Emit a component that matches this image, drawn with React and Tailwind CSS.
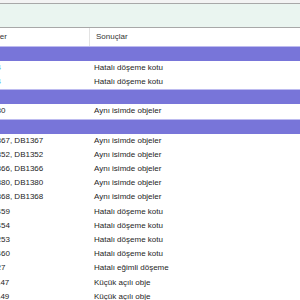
const groups = [
    {
        rows: [
            { ad: "DB14", sonuc: "Hatalı döşeme kotu", link: true },
            { ad: "DB14", sonuc: "Hatalı döşeme kotu", link: true },
        ],
    },
    {
        rows: [{ ad: "DB130", sonuc: "Aynı isimde objeler" }],
    },
    {
        rows: [
            { ad: "DB1367, DB1367", sonuc: "Aynı isimde objeler" },
            { ad: "DB1352, DB1352", sonuc: "Aynı isimde objeler" },
            { ad: "DB1366, DB1366", sonuc: "Aynı isimde objeler" },
            { ad: "DB1380, DB1380", sonuc: "Aynı isimde objeler" },
            { ad: "DB1368, DB1368", sonuc: "Aynı isimde objeler" },
            { ad: "DB1459", sonuc: "Hatalı döşeme kotu" },
            { ad: "DB1454", sonuc: "Hatalı döşeme kotu" },
            { ad: "DB1253", sonuc: "Hatalı döşeme kotu" },
            { ad: "DB1460", sonuc: "Hatalı döşeme kotu" },
            { ad: "DB127", sonuc: "Hatalı eğimli döşeme" },
            { ad: "DB1147", sonuc: "Küçük açılı obje" },
            { ad: "DB1149", sonuc: "Küçük açılı obje" },
        ],
    },
];

const Satir = ({ ad, sonuc, link }) => (
    <div className="flex h-[14.2px] items-center">
        <div className="w-[90px] overflow-hidden whitespace-nowrap">
            <span className={`-ml-[19px] inline-block ${link ? "text-[#3b9cf0]" : ""}`}>{ad}</span>
        </div>
        <div className="pl-[4px] whitespace-nowrap">{sonuc}</div>
    </div>
);

export default function App() {
    return (
        <div className="w-[300px] h-[300px] overflow-hidden bg-white font-['Liberation_Sans',Arial,sans-serif] text-[8px] leading-none text-[#1e1e1e]">
            <div className="h-[3px] bg-[#f3f3f3]" />
            <div className="h-[25px] bg-[#eaf5f0] border-y border-[#a8a8a8]" />

            <div className="flex h-[18px] items-center bg-white text-[#333]">
                <div className="w-[90px] h-full flex items-center overflow-hidden whitespace-nowrap border-r border-[#e3e3e3]">
                    <span className="-ml-[19px] inline-block">Objeler</span>
                </div>
                <div className="pl-[6px]">Sonuçlar</div>
            </div>

            {groups.map((g, i) => (
                <div key={i}>
                    <div className="h-[15px] bg-[#7875d9] border-t border-[#bdbbf0]" />
                    {g.rows.map((r, j) => (
                        <Satir key={j} {...r} />
                    ))}
                </div>
            ))}
        </div>
    );
}
